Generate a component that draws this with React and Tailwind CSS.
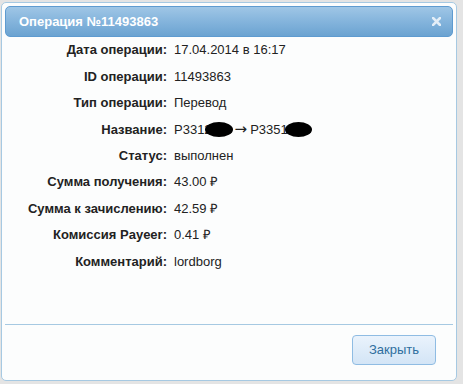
import React from 'react';

const rows = [
  { label: 'Дата операции:', value: '17.04.2014 в 16:17' },
  { label: 'ID операции:', value: '11493863' },
  { label: 'Тип операции:', value: 'Перевод' },
  { label: 'Название:', value: 'name' },
  { label: 'Статус:', value: 'выполнен' },
  { label: 'Сумма получения:', value: '43.00 ₽' },
  { label: 'Сумма к зачислению:', value: '42.59 ₽' },
  { label: 'Комиссия Payeer:', value: '0.41 ₽' },
  { label: 'Комментарий:', value: 'lordborg' },
];

function Blob({ className }) {
  return <span className={`inline-block h-[15px] rounded-[50%] bg-black ${className}`} />;
}

function NameValue() {
  return (
    <span className="inline-flex items-center">
      <span>P3312</span>
      <Blob className="-ml-[7px] w-[28px]" />
      <span className="ml-[2px] font-['DejaVu_Sans'] text-[15px] leading-none">→</span>
      <span className="ml-[3px]">P3351</span>
      <Blob className="-ml-[3px] w-[27px]" />
    </span>
  );
}

export default function App() {
  return (
    <div
      className="w-[463px] h-[384px] bg-[#e4e4e4] pt-[2px] pl-[1px] overflow-hidden"
      style={{ fontFamily: '"Liberation Sans", Arial, sans-serif' }}
    >
      <div className="w-[456px] h-[379px] border border-[#a6c9e2] rounded-[5px] bg-[#fcfdfd] p-[3px] flex flex-col">
        <div className="h-[31px] shrink-0 flex items-center justify-between rounded-[5px] border border-[#5e9bd0] bg-gradient-to-b from-[#9fc6e6] via-[#84b4dc] to-[#6ba3d1] pl-[13px] pr-[11px]">
          <span className="text-white font-bold text-[13px]">Операция №11493863</span>
          <svg width="9" height="9" viewBox="0 0 9 9">
            <path d="M1 1L8 8M8 1L1 8" stroke="#e4eef7" strokeWidth="2.6" strokeLinecap="square" />
          </svg>
        </div>

        <div className="flex flex-col text-[13px] text-[#222]">
          {rows.map((r) => (
            <div key={r.label} className="h-[26.4px] flex items-center">
              <span className="w-[162px] text-right font-bold">{r.label}</span>
              <span className="ml-[7px]">{r.value === 'name' ? <NameValue /> : r.value}</span>
            </div>
          ))}
        </div>

        <div className="flex-1" />

        <div className="border-t border-[#a6c9e2] flex justify-end pt-[10px] pb-[12px] pr-[17px]">
          <button className="w-[84px] h-[30px] rounded-[4px] border border-[#8fbce3] bg-gradient-to-b from-[#eaf3fc] to-[#d3e5f6] text-[#2e6e9e] text-[13px]">
            Закрыть
          </button>
        </div>
      </div>
    </div>
  );
}
